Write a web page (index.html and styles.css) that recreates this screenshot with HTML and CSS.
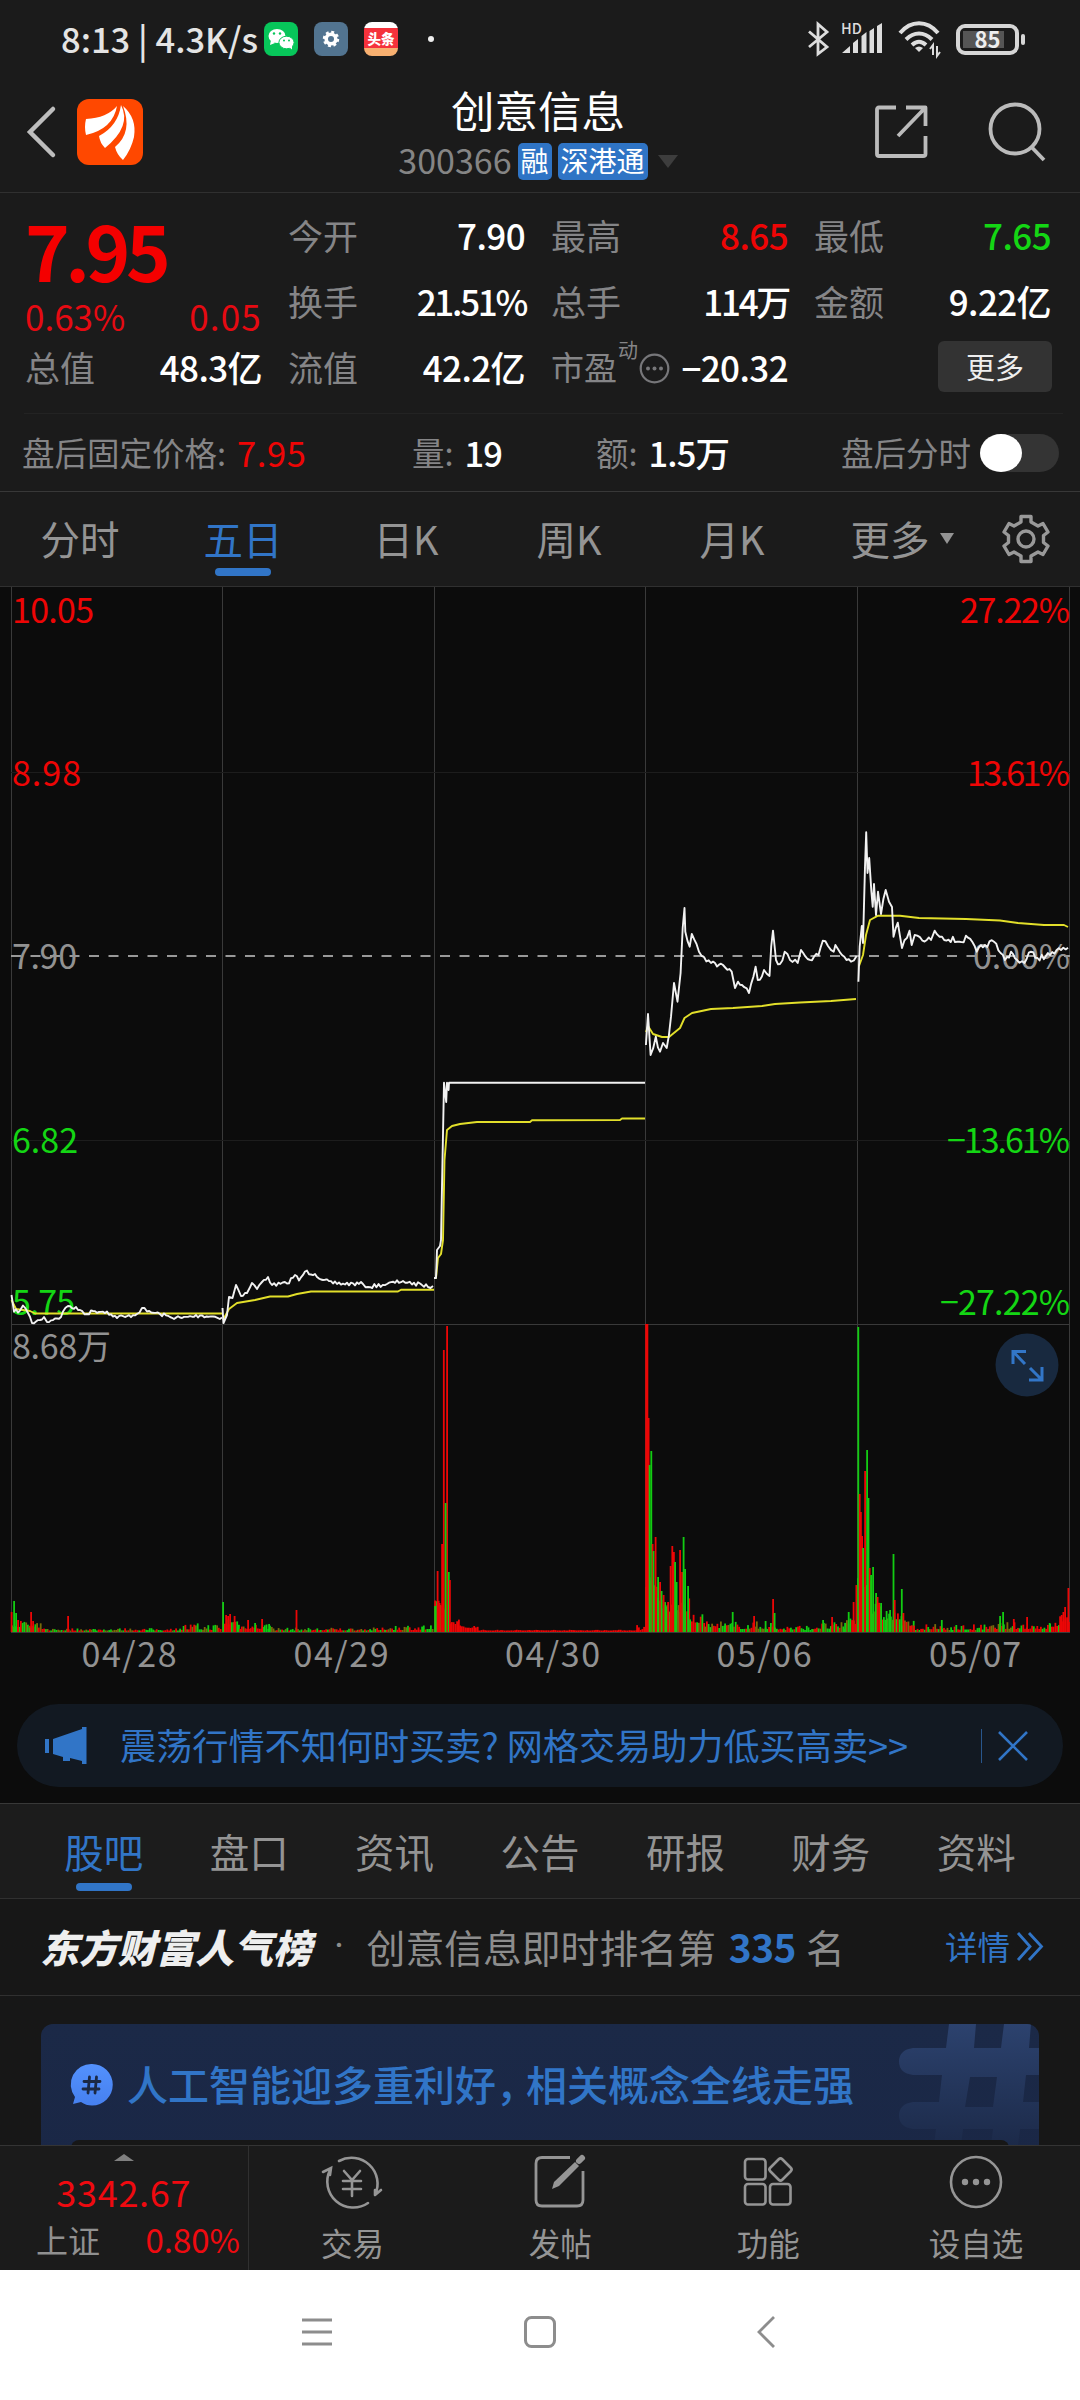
FILE: index.html
```html
<!DOCTYPE html>
<html lang="zh-CN">
<head>
<meta charset="utf-8">
<title>创意信息 300366</title>
<link rel="stylesheet" href="styles.css">
</head>
<body>
<div class="app">
  <header class="top">
    <div class="status">
      <span class="clock">8:13 | 4.3K/s</span>
      <div class="notif">
        <svg width="34" height="34" viewBox="0 0 34 34"><rect width="34" height="34" rx="8" fill="#07c65a"/><ellipse cx="13" cy="14" rx="8.5" ry="7" fill="#fff"/><path d="M7 18l-1 5 5-2z" fill="#fff"/><ellipse cx="22.500" cy="20.500" rx="7.600" ry="6.300" fill="#fff" stroke="#07c65a" stroke-width="1"/><path d="M25 25l3 2.500 0-5z" fill="#fff"/><g fill="#07c65a"><circle cx="10" cy="11.500" r="1.200"/><circle cx="16" cy="11.500" r="1.200"/><circle cx="20" cy="18.500" r="1"/><circle cx="25" cy="18.500" r="1"/></g></svg>
        <svg width="34" height="34" viewBox="0 0 34 34"><rect width="34" height="34" rx="8" fill="#527490"/><circle cx="17" cy="17" r="4.800" fill="none" stroke="#fff" stroke-width="3.600"/><circle cx="17" cy="17" r="7" fill="none" stroke="#fff" stroke-width="2.400" stroke-dasharray="2.900 2.600"/></svg>
        <span class="toutiao"><b>头条</b><i></i></span>
        <span class="dot"></span>
      </div>
      <div class="sys">
        <svg width="21" height="34" viewBox="0 0 21 34" fill="none" stroke="#ddd" stroke-width="2.800"><path d="M1 9.500L19 25 10 32V2l9 8L1 25"/></svg>
        <svg class="signal" width="42" height="34" viewBox="0 0 42 34"><g fill="#ddd"><path d="M1 31l8-7v7zM12 31V21l5-4v14zM20.500 31V14l5-4v21zM28.500 31V9l4.500-3v25zM36 31V4l5-3v30z"/></g><text class="hd" x="0" y="12">HD</text></svg>
        <svg class="wifi" width="44" height="36" viewBox="0 0 44 36" fill="none" stroke="#ddd" stroke-width="4"><path d="M2 12C13-1 29-1 40 12M8 18.500c8-8 18-8 26 0M14 24c5-4.500 9-4.500 14 0"/><path d="M21 31l-4-4q4-3 8 0z" fill="#ddd" stroke="none"/><path d="M35 34V24l-3 4M39 25v10l3-4" stroke-width="2"/></svg>
        <span class="battery"><em></em><b>85</b></span>
      </div>
    </div>
    <div class="titlebar">
      <div class="tb-left">
        <svg width="29" height="52" viewBox="0 0 29 52" fill="none" stroke="#bdbdbd" stroke-width="4.500" stroke-linecap="round"><path d="M26 3L3 26l23 23"/></svg>
        <svg width="66" height="66" viewBox="0 0 66 66"><rect width="66" height="66" rx="12" fill="#ff4800"/><g fill="#fff"><path d="M9 20Q30 19 40 7 36 30 9 36Q7 28 9 20z"/><path d="M22 37Q41 27 44 6 55 27 28 49 23 44 22 37z"/><path d="M46 7Q60 19 57 38 54 51 46 61 40 56 38 48 56 33 46 7z"/></g></svg>
      </div>
      <div class="tb-mid">
        <h1>创意信息</h1>
        <div class="code"><span>300366</span><b>融</b><b>深港通</b><i></i></div>
      </div>
      <div class="tb-right">
        <svg width="53" height="54" viewBox="0 0 53 54" fill="none" stroke="#bbb" stroke-width="3.800"><path d="M21 2.500H4q-2 0-2 2V49q0 2 2 2H48q2.500 0 2.500-2V31M31 2.500H50.500V21M50 3L23 31" stroke-linejoin="round"/></svg>
        <svg width="58" height="58" viewBox="0 0 58 58" fill="none" stroke="#bbb" stroke-width="3.800"><circle cx="27" cy="26" r="24.500"/><path d="M43.500 44L56 57"/></svg>
      </div>
    </div>
  </header>

  <section class="quote">
    <div class="stats">
      <div class="main">
        <div class="price">7.95</div>
        <div class="chg"><span>0.63%</span><span class="diff">0.05</span></div>
        <div class="pair"><label>总值</label><b>48.3亿</b></div>
      </div>
      <div class="col">
        <div class="pair"><label>今开</label><b>7.90</b></div>
        <div class="pair"><label>换手</label><b class="tight">21.51%</b></div>
        <div class="pair"><label>流值</label><b>42.2亿</b></div>
      </div>
      <div class="col">
        <div class="pair"><label>最高</label><b class="up">8.65</b></div>
        <div class="pair"><label>总手</label><b class="tight">114万</b></div>
        <div class="pair"><label class="pe">市盈<sup>动</sup><svg width="31" height="31" viewBox="0 0 31 31"><circle cx="15.500" cy="15.500" r="13.800" fill="none" stroke="#77777a" stroke-width="2.200"/><g fill="#77777a"><circle cx="9" cy="15.500" r="2"/><circle cx="15.500" cy="15.500" r="2"/><circle cx="22" cy="15.500" r="2"/></g></svg></label><b>−20.32</b></div>
      </div>
      <div class="col">
        <div class="pair"><label>最低</label><b class="down">7.65</b></div>
        <div class="pair"><label>金额</label><b>9.22亿</b></div>
        <div class="pair end"><button>更多</button></div>
      </div>
    </div>
    <div class="after">
      <div class="af a1">盘后固定价格:<b class="up">7.95</b></div>
      <div class="af a2">量:<b>19</b></div>
      <div class="af a3">额:<b>1.5万</b></div>
      <div class="af a4">盘后分时<span class="toggle"></span></div>
    </div>
  </section>

  <nav class="periods">
    <span>分时</span><span class="on">五日</span><span>日K</span><span>周K</span><span>月K</span><span class="more">更多<i></i></span>
    <svg width="50" height="50" viewBox="0 0 50 50" fill="none" stroke="#999" stroke-width="3.400" stroke-linejoin="round"><path d="M20 2.500H30V8L37 12 42 9.500 47 18 42.500 21.500V28.500L47 32 42 40.500 37 38 30 42V47.500H20V42L13 38 8 40.500 3 32 7.500 28.500V21.500L3 18 8 9.500 13 12 20 8z"/><circle cx="25" cy="25" r="8"/></svg>
  </nav>

  <section class="chart">
    <svg class="plot" width="1080" height="1103" viewBox="0 587 1080 1103">
      <g class="grid">
        <path d="M11.500 587V1632M222.500 587V1632M434.500 587V1632M645.500 587V1632M857.500 587V1632M1069.500 587V1632M11 1324.500H1070M11 1632.500H1070"/>
        <path class="faint" d="M11 772.500H1070M11 1140.500H1070"/>
      </g>
      <path class="mid" d="M11 956H1070"/>
      <g id="volume"></g>
      <g class="axis">
        <text class="up" x="12" y="623" textLength="82">10.05</text><text class="up" x="12" y="786" textLength="69">8.98</text><text class="flat" x="12" y="969" textLength="65">7.90</text><text class="down" x="12" y="1153" textLength="66">6.82</text><text class="down" x="12" y="1315" textLength="63">5.75</text><text class="flat" x="12" y="1359" textLength="99">8.68万</text>
      </g>
      <g class="axis right">
        <text class="up" x="1070" y="623" textLength="110">27.22%</text><text class="up" x="1070" y="786" textLength="103">13.61%</text><text class="flat" x="1070" y="969" textLength="97">0.00%</text><text class="down" x="1070" y="1153" textLength="123">−13.61%</text><text class="down" x="1070" y="1315" textLength="130">−27.22%</text>
      </g>
      <g id="lines"></g>
      <g class="axis dates">
        <text x="129" y="1667" textLength="95">04/28</text><text x="341" y="1667" textLength="95">04/29</text><text x="552.500" y="1667" textLength="95">04/30</text><text x="764" y="1667" textLength="95">05/06</text><text x="975" y="1667" textLength="92">05/07</text>
      </g>
      <circle cx="1027" cy="1365" r="31.500" fill="#18293f"/>
      <path class="expand" d="M1013 1364V1351.500H1026M1013 1351.500L1025 1364M1042 1367V1380H1029M1042 1380L1030 1368"/>
    </svg>
    <div class="tip">
      <svg width="42" height="37" viewBox="0 0 42 37" fill="#3175c7"><path d="M0 12h4v14H0zM8 12L37 2V0h4.500v37H37v-3l-12-3v3h-7v-4L8 27z"/></svg>
      <span>震荡行情不知何时买卖? 网格交易助力低买高卖&gt;&gt;</span>
      <i></i>
      <svg width="30" height="30" viewBox="0 0 30 30" fill="none" stroke="#3175c7" stroke-width="2.600"><path d="M1 1L29 29M29 1L1 29"/></svg>
    </div>
  </section>

  <nav class="sections">
    <span class="on">股吧</span><span>盘口</span><span>资讯</span><span>公告</span><span>研报</span><span>财务</span><span>资料</span>
  </nav>

  <section class="rank">
    <strong>东方财富人气榜</strong><i>·</i><span>创意信息即时排名第</span><b>335</b><span>名</span>
    <a>详情<svg width="28" height="29" viewBox="0 0 28 29" fill="none" stroke="#3175c7" stroke-width="2.800"><path d="M2 1L14 14.500 2 28M13 1L25.500 14.500 13 28"/></svg></a>
  </section>

  <section class="feed">
    <div class="card">
      <svg class="hash" width="140" height="122" viewBox="0 0 140 122"><defs><linearGradient id="hg" x1="0" y1="0" x2="0" y2="1"><stop offset="0" stop-color="#2c426e"/><stop offset="1" stop-color="#1c2a49"/></linearGradient></defs><path fill="url(#hg)" fill-rule="evenodd" d="M50 0H77L75 24H102L105 0H132L130 24H140V51H127L124 78H140V105H121L119 122H92L94 105H64L62 122H35L37 105H14Q0 103 0 91.500Q0 80 14 78H40L43 51H14Q0 49 0 37.500Q0 26 14 24H47zM71 53L66 83H94L98 53z"/></svg>
      <div class="topic">
        <svg width="42" height="42" viewBox="0 0 42 42"><defs><linearGradient id="bg" x1="0" y1="0" x2="0" y2="1"><stop offset="0" stop-color="#5391fd"/><stop offset="1" stop-color="#4680ef"/></linearGradient></defs><path d="M21 0a20.500 20.500 0 1 1 0 41.500Q15 41.500 10 38L2 40 4 33A20.500 20.500 0 0 1 21 0z" fill="url(#bg)"/><path d="M18.500 13L17 29M25.500 13L24 29M13 17.500H29M12 25H28" stroke="#1b2945" stroke-width="2.800" stroke-linecap="round"/></svg>
        <span>人工智能迎多重利好<em>，</em>相关概念全线走强</span>
      </div>
      <div class="inner"></div>
    </div>
  </section>

  <footer class="bottom">
    <div class="index">
      <i></i>
      <div class="pt">3342.67</div>
      <div class="row"><span>上证</span><b>0.80%</b></div>
    </div>
    <div class="act">
      <svg width="60" height="56" viewBox="0 0 60 56" fill="none" stroke="#959595" stroke-width="2.600" stroke-linecap="round"><path d="M17 7A26 26 0 0 1 53 41M53 41V36M53 41L59 36M46 49A26 26 0 0 1 8 16M1 18L9 14 8 21M22 17l8 9 8-9M30 26V42M21 27H39M21 35H39"/></svg>
      <span>交易</span>
    </div>
    <div class="act">
      <svg width="54" height="56" viewBox="0 0 54 56" fill="none" stroke="#959595" stroke-width="2.800"><path d="M37 3.500H9q-6 0-6 6V46q0 6 6 6H44q6 0 6-6V17"/><path d="M19 35L21 28 42 8 46 12 26 32z" fill="#959595" stroke="none"/><path d="M46 7L49 4" stroke-width="6" stroke-linecap="round"/></svg>
      <span>发帖</span>
    </div>
    <div class="act">
      <svg width="50" height="56" viewBox="0 0 50 56" fill="none" stroke="#959595" stroke-width="2.600"><rect x="2" y="5" width="20.500" height="20.500" rx="3"/><rect x="2" y="30" width="20.500" height="20.500" rx="3"/><rect x="27" y="30" width="20.500" height="20.500" rx="3"/><rect x="29" y="7" width="17" height="17" rx="2.500" transform="rotate(45 37.500 15.500)"/></svg>
      <span>功能</span>
    </div>
    <div class="act">
      <svg width="54" height="56" viewBox="0 0 54 56"><circle cx="27" cy="28" r="25" fill="none" stroke="#959595" stroke-width="2.600"/><g fill="#959595"><circle cx="16" cy="28" r="3.200"/><circle cx="27" cy="28" r="3.200"/><circle cx="38" cy="28" r="3.200"/></g></svg>
      <span>设自选</span>
    </div>
  </footer>

  <div class="sysnav">
    <svg width="30" height="32" viewBox="0 0 30 32" stroke="#8d8d8d" stroke-width="2.800"><path d="M0 4H30M0 16H30M0 28H30"/></svg>
    <svg class="home" width="32" height="32" viewBox="0 0 32 32" fill="none" stroke="#8d8d8d" stroke-width="3"><rect x="1.500" y="1.500" width="29" height="29" rx="6"/></svg>
    <svg width="19" height="32" viewBox="0 0 19 32" fill="none" stroke="#8d8d8d" stroke-width="2.800"><path d="M17 1L2 16 17 31"/></svg>
  </div>
</div>
<script src="chart.js"></script>
</body>
</html>
```
FILE: styles.css
```css
* { box-sizing: border-box; margin: 0; padding: 0; }
body {
  width: 1080px;
  background: #1b1b1b;
  color: #fff;
  font-family: "Noto Sans CJK SC", sans-serif;
  font-size: 35px;
  line-height: 1;
}
svg { display: block; flex: none; overflow: visible; }
i, em { font-style: normal; }
.app { width: 1080px; height: 2400px; overflow: hidden; display: flex; flex-direction: column; }
.app > * { flex: none; }
.up { color: #ee0505 !important; fill: #ee0505; }
.down { color: #14d614 !important; fill: #14d614; }

/* status bar and title */
.top { height: 193px; border-bottom: 1px solid #303030; }
.status { height: 78px; display: flex; align-items: center; padding: 0 55px 0 61px; }
.clock { width: 203px; font-size: 34.5px; font-weight: 500; color: #e4e4e4; white-space: nowrap; margin-top: -2px; }
.notif { display: flex; align-items: center; gap: 16px; }
.toutiao { width: 34px; height: 34px; border-radius: 8px; overflow: hidden; background: linear-gradient(#fff 0 6px, #f5323c 6px 26px, #f8b070 26px); display: flex; justify-content: center; }
.toutiao b { font-size: 13.5px; font-weight: 900; line-height: 32px; }
.dot { width: 6px; height: 6px; border-radius: 3px; background: #eee; margin-left: 14px; }
.sys { margin-left: auto; display: flex; align-items: center; }
.signal { margin-left: 12px; }
.wifi { margin-left: 15px; }
.hd { font: 500 14.5px "Noto Sans CJK SC", sans-serif; fill: #ddd; }
.battery { position: relative; margin: 0 6px 0 14px; width: 63px; height: 31px; border: 4px solid #d6d6d6; border-radius: 9px; display: flex; align-items: center; justify-content: center; }
.battery em { position: absolute; left: 3px; top: 3px; bottom: 3px; width: 41px; background: #555; }
.battery b { position: relative; font-size: 22px; font-weight: 700; color: #eee; line-height: 20px; margin-top: -2px; }
.battery::after { content: ""; position: absolute; right: -10px; top: 6px; width: 4px; height: 11px; border-radius: 2px; background: #d6d6d6; }
.titlebar { height: 106px; display: grid; grid-template-columns: 1fr auto 1fr; align-items: center; padding: 0 31px 0 27px; }
.tb-left { display: flex; align-items: center; gap: 21px; }
.tb-mid { display: flex; flex-direction: column; align-items: center; padding-top: 8px; }
.tb-right { display: flex; align-items: center; justify-content: flex-end; gap: 60px; padding-right: 3px; }
h1 { font-size: 43.500px; font-weight: 400; line-height: 52px; margin-top: -2px; }
.code { display: flex; align-items: center; gap: 6px; height: 50px; font-size: 34px; color: #858585; margin-left: 0; }
.code span { line-height: 34px; margin-top: -3px; }
.code b { font-weight: 400; font-size: 28px; line-height: 34px; height: 37px; padding: 0 3px; border-radius: 5px; background: #2f74c5; color: #fff; }
.code i { border: 10px solid transparent; border-top: 13px solid #3d3d3d; border-bottom: 0; margin-left: 4px; }

/* quote */
.quote { height: 299px; padding-top: 8px; border-bottom: 1px solid #383838; }
.stats { display: grid; grid-template-columns: repeat(4, 235px); gap: 28px; padding: 0 27px; height: 213px; border-bottom: 1px solid transparent; background: linear-gradient(#232323, #232323) 24px 212px / 1039px 1px no-repeat border-box; }
.price { height: 92px; line-height: 96px; font-size: 76px; font-weight: 700; color: #f40000; letter-spacing: -4.500px; margin-left: -2px; }
.chg { height: 46px; display: flex; justify-content: space-between; align-items: center; color: #e60a12; margin-left: -2px; }
.chg span { margin-top: -2px; }
.diff { letter-spacing: 1.200px; }
.pair { height: 66px; display: flex; justify-content: space-between; align-items: center; white-space: nowrap; }
.main .pair { height: 54px; }
.pair label { color: #858587; margin-left: -2px; }
.pair b { font-weight: 500; letter-spacing: -.6px; }
.pair b.tight { letter-spacing: -2.300px; margin-right: -1px; }
.pe { display: flex; align-items: center; }
.pair .pe { font-size: 33px; }
.pe sup { font-size: 20px; align-self: flex-start; margin: -9px 1px 0 1px; }
.pe svg { margin-top: 4px; }
.end { justify-content: flex-end; }
.end button { width: 114px; height: 51px; border: 0; border-radius: 6px; background: #333; color: #eee; font: 400 29px/46px "Noto Sans CJK SC", sans-serif; margin-right: -1px; }
.after { height: 77px; display: grid; grid-template-columns: 390px 184px 245px 238px; padding-left: 22px; align-items: center; color: #858587; }
.af { display: flex; align-items: center; font-size: 32.500px; white-space: nowrap; }
.af b { font-size: 34.500px; font-weight: 500; color: #fff; margin-left: 11px; letter-spacing: -.9px; }
.af b.up { font-weight: 400; letter-spacing: .6px; }
.toggle { width: 79px; height: 38px; border-radius: 19px; background: #343434; margin-left: 9px; }
.toggle::before { content: ""; display: block; width: 42px; height: 38px; border-radius: 50%; background: #fff; }

/* tabs */
.periods { height: 95px; display: flex; align-items: center; border-bottom: 1px solid #303030; font-size: 39.500px; color: #949494; }
.periods span { width: 163px; height: 94px; line-height: 91px; text-align: center; position: relative; padding-right: 3px; }
.periods svg { margin-left: 23px; }
.periods .more { display: flex; justify-content: center; gap: 10px; }
.more i { border: 7px solid transparent; border-top: 11px solid #949494; border-bottom: 0; margin: 41px -14px 0 0; height: 11px; }
.on { color: #3175c7; }
.on::after { content: ""; position: absolute; left: calc(50% - 28px); bottom: 10px; width: 56px; height: 8px; border-radius: 4px; background: #3175c7; }
.periods .on::after { left: 52px; }

/* chart */
.chart { height: 1216px; background: #0c0c0c; }
.grid path { stroke: #3a3a3a; fill: none; }
.grid .faint { stroke: #1d1d1d; }
.mid { stroke: #999; stroke-width: 1.800; stroke-dasharray: 10 9.500; }
.axis { font-size: 34px; }
.right { text-anchor: end; }
.flat, .dates { fill: #929292; }
.dates { text-anchor: middle; font-size: 34px; }
.expand { fill: none; stroke: #3276c8; stroke-width: 3; }
.price-line, .avg-line { fill: none; stroke-width: 1.900; stroke-linejoin: round; }
.price-line { stroke: #f2f2f2; }
.avg-line { stroke: #e2df2a; }
.tip { margin: 14px 17px 0; height: 83px; border-radius: 42px; background: #121922; color: #3175c7; display: flex; align-items: center; padding: 0 35px 0 28px; }
.tip span { margin: -2px auto 0 33px; font-size: 36.150px; white-space: nowrap; }
.tip i { width: 1px; height: 34px; background: #28568c; margin-right: 16px; }

.sections { height: 96px; border-top: 1px solid #383838; border-bottom: 1px solid #303030; background: #1c1c1c; display: flex; padding: 0 31px; color: #949494; font-size: 39.500px; }
.sections span { flex: 1; text-align: center; line-height: 93px; position: relative; }
.sections .on { color: #3175c7; }
.sections .on::after { bottom: 7px; }

.rank { height: 97px; border-bottom: 1px solid #303030; background: #171717; display: flex; align-items: center; padding: 0 36px 0 40px; font-size: 38.800px; color: #8d8d8d; white-space: nowrap; }
.rank > * { margin-top: -1px; }
.rank strong { font-weight: 900; font-style: italic; color: #eee; }
.rank i { width: 55px; text-align: center; font-family: Roboto, sans-serif; }
.rank b { color: #3175c7; font-weight: 700; margin: -2px 10px 0 13px; letter-spacing: -.5px; }
.rank a { margin-left: auto; display: flex; align-items: center; gap: 6px; font-size: 32.500px; color: #3175c7; }

.feed { height: 149px; background: #171717; padding: 28px 41px 0; overflow: hidden; }
.card { position: relative; height: 140px; border-radius: 12px 12px 0 0; background: linear-gradient(#1b2947, #1a2746); overflow: hidden; }
.hash { position: absolute; right: 0; top: 0; }
.topic { position: relative; height: 116px; display: flex; align-items: center; gap: 14px; padding: 5px 0 0 30px; color: #3175c7; font-size: 41px; font-weight: 500; white-space: nowrap; }
.topic span { margin-top: -3px; }
.topic em { letter-spacing: -11px; }
.inner { position: relative; margin: 0 30px; height: 24px; border-radius: 8px 8px 0 0; background: #171717; }

/* bottom bar */
.bottom { height: 125px; background: #1b1b1b; border-top: 1px solid #343434; display: flex; }
.index { width: 249px; border-right: 1px solid #303030; display: flex; flex-direction: column; align-items: center; padding-top: 8px; color: #ef0a10; }
.index i { border: 10px solid transparent; border-bottom: 7px solid #808080; border-top: 0; }
.pt { line-height: 61px; height: 60px; font-size: 36px; letter-spacing: .7px; }
.row { width: 204px; display: flex; justify-content: space-between; align-self: flex-start; margin-left: 36px; line-height: 36px; font-size: 33px; }
.row span { color: #909090; font-size: 32px; }
.row b { font-weight: 400; }
.act { width: 208.300px; display: flex; flex-direction: column; align-items: center; padding-top: 8px; font-size: 31.500px; color: #959595; }
.act span { line-height: 38px; margin-top: 13px; }
.sysnav { height: 130px; background: #fff; display: flex; align-items: center; padding: 0 0 6px 302px; }
.home { margin: 0 201px 0 192px; }
```
FILE: chart.js
```js
const NS = 'http://www.w3.org/2000/svg';
let seed = 7;
const rnd = () => (seed = (seed * 16807) % 2147483647) / 2147483647;

function add(parent, tag, attrs) {
  const el = document.createElementNS(NS, tag);
  for (const k in attrs) el.setAttribute(k, attrs[k]);
  document.getElementById(parent).appendChild(el);
}

// Intraday price, one series per trading day; the second value is tick noise.
const prices = [
  [[11.5,1295,14,1311.7,20,1310.5,23,1305.5,28,1313,32,1323,40,1320,44,1317,47,1322,55,1318.5,61,1317,63,1311.5,68,1306,80,1310,87,1314,93,1311,107,1311.5,113,1316.5,125,1317,137,1314,142,1308,147,1311.5,160,1314,170,1317,182,1318,200,1315.5,213,1316.5,222,1317.5], 2.5],
  [[222.5,1308,223.5,1323,227,1315,229,1297,232.5,1298,236,1285,241,1296,247,1293,252,1283,257,1289,262,1282,268,1277,272,1285,287,1283.5,295,1275,299,1280.5,305,1271.5,315,1274,323,1280,333,1283.5,363,1284,368,1287,387,1284,403,1281,412,1284.5,420,1283.5,428,1287,433,1286], 2.5],
  [[434,1278,436,1278,437,1250,440,1246,441,1240,442.5,1160,444,1082.7,446.2,1102,447,1082.7,448.6,1090,449,1082.7,645,1082.7], 0],
  [[645.9,1045,648,1014,650.6,1055,655.8,1036.7,660,1051.7,663,1043,666.7,1048,671,1016.7,674,983,677.5,1001.7,680.6,973,682.7,928,684.5,908,685.3,931.7,689.7,946.7,691.8,934,699,951.7,704,957,711,963,723,965,731.7,971.7,735,988,738,981.7,742,985,749,993,753.4,976.7,755.6,966.7,757.8,980,764,970,769.5,976,771.2,946.7,773,930.7,776,960,780,964,784.7,951.7,790,960,797.7,963,801,950,807.6,959,818.5,955,822.8,940.7,828,946,833.7,951.7,835.4,945,842,955,851,961.7,856.6,956], 4],
  [[858.4,981.7,859.7,946.7,861.8,926,863,943,865,866.7,866.2,832.3,867.5,873,869.2,858,871.4,891.7,872.7,906.7,874,884,876,915,878,891.7,881,914,885.7,890,889,901.7,892,907,893.5,936.7,897.8,922.7,902,948,909.5,930.7,911.7,945,914.7,935,922.5,940.7,931,940,934.7,930.7,942,936.7,959.4,941.7,968,937.7,976.7,951.7,985,945,994,941.7,1000.6,953,1005,960,1011,951.7,1017,960,1024.5,963,1031,951.7,1037.5,958,1050,955,1061,950,1068,947.7], 4]
];
const averages = [
  [11.5,1300,16,1309,30,1311,35,1313.5,222,1313.5],
  [223,1320,229,1309,237,1303,255,1300,270,1296.5,288,1296.5,297,1294,311,1291.5,398,1291.5,401,1289.7,434,1289.7],
  [434.5,1278,436,1278,438,1258,441,1254,443,1240,444.5,1160,447,1130,452,1126,460,1124,477,1122,530,1122,532,1120.3,620,1120,622,1118.5,645,1118.5],
  [646,1032,648,1026,653,1034,662,1037,669,1037,680,1028,684.5,1018,692,1013,711,1009,733,1008,762,1006,775,1004,800,1002.5,831,1001,856,999],
  [859,966,863,955,866,935,870,920,878,915.7,900,915.7,919,918,966,919,1000,920.5,1018,923,1044,925,1064,925,1068,927]
];

averages.forEach(p => add('lines', 'polyline', { class: 'avg-line', points: p.join(' ') }));
prices.forEach(([p, noise]) => {
  const pts = [];
  for (let i = 0; i < p.length; i += 2) {
    pts.push(p[i] + ',' + p[i + 1]);
    if (i + 2 >= p.length || !noise) continue;
    const dx = p[i + 2] - p[i], n = Math.floor(dx / 2);
    for (let k = 1; k < n; k++) {
      const t = k / n;
      pts.push((p[i] + dx * t).toFixed(1) + ',' + (p[i + 1] + (p[i + 3] - p[i + 1]) * t + (rnd() - .5) * noise * 1.6).toFixed(1));
    }
  }
  add('lines', 'polyline', { class: 'price-line', points: pts.join(' ') });
});

const BASE = 1632, RED = '#ec0606', GREEN = '#12cc12', MIX = '#7a6a0a';
const bar = (x, h, color) => add('volume', 'rect', { x: (x - .8).toFixed(1), y: (BASE - h).toFixed(1), width: 1.8, height: h.toFixed(1), fill: color });

// Quiet-market background: [from, to, base height, spread, share of red].
[[12,30,5,7,.5],[30,44,3,6,.6],[44,180,1.5,2.5,.6],[180,222,2,7,.7],
 [223,240,7,9,.7],[240,275,3,6,.6],[275,385,1.5,3,.6],[385,434,2,6,.6],
 [435,450,22,10,.9],[450,460,8,6,1.3],[460,478,4,3,1.3],[478,637,1.5,.8,1.3],[637,645,2,7,1.3],
 [646,658,45,25,.6],[658,668,22,14,.5],[668,690,20,14,.6],[690,705,9,9,.5],[705,725,4,8,.5],[725,775,3,8,.5],[775,815,2,5,.5],[815,845,3,7,.5],[845,857,8,8,.5],
 [858,872,45,25,.6],[872,882,18,12,.5],[882,903,12,10,.5],[903,914,6,6,.5],[914,995,2,6,.55],[995,1050,3,7,.55],[1050,1060,5,6,.7],[1060,1069,10,8,1.3]
].forEach(([a, b, h, s, red]) => {
  for (let x = a; x < b; x += 1.76) {
    const r = rnd();
    bar(x, h + s * Math.pow(rnd(), 2), r < red * .8 ? RED : r < .8 ? GREEN : MIX);
  }
});

const r = 1, g = 0;
[[11.5,20,r],[14,31,g],[16,19,g],[18,12,r],[31,20,r],[33,11,r],[68,16,r],
 [223,30,g],[226,17,r],[228,16,r],[230,18,r],[234.5,16,r],[248,12,r],[255,9,g],[262,13,r],[269,8,g],[296.4,22,r],
 [435,26,g],[437.5,61,r],[439.5,29,r],[442,88,r],[443.7,282,r],[447,306,r],[445.5,129,g],[448.7,60,g],[449.8,52,r],
 [646,308,r],[647.3,308,r],[648.5,214,r],[649.5,167,g],[651.2,181,g],[652.5,88,r],[653.5,81,g],[655.5,95,r],[658,55,g],[660,50,r],[661.5,41,g],[663.5,37,r],[665.5,27,g],[668,30,r],[670.5,66,r],[672.2,86,r],[673.8,80,r],[675,70,g],[676.5,50,g],[680,82,r],[682,60,r],[683.5,95,g],[685,63,g],[688,46,g],[732.6,20,g],[754,16,r],[765.5,11,g],[773,33,r],[774.5,19,g],[823,12,g],[832,15,r],[848.6,20,g],[853.5,30,r],[856.3,47,r],
 [858.2,305,g],[859.6,138,r],[860.8,120,r],[862,96,r],[863,84,g],[865,161,r],[867,182,g],[868.4,134,g],[869.6,64,r],[871,57,g],[873,65,g],[876,39,g],[877.5,35,r],[881,29,g],[886.5,21,g],[890,22,g],[893.4,78,g],[894.6,32,r],[901.7,43,g],[903.3,19,r],[941.7,12,g],[1000,16,g],[1003,20,g],[1013.7,13,r],[1027,15,r],[1061.6,17,r],[1063.3,20,r],[1065,25,r],[1068.3,44,r]
].forEach(([x, h, c]) => bar(x, h, c ? RED : GREEN));
```
